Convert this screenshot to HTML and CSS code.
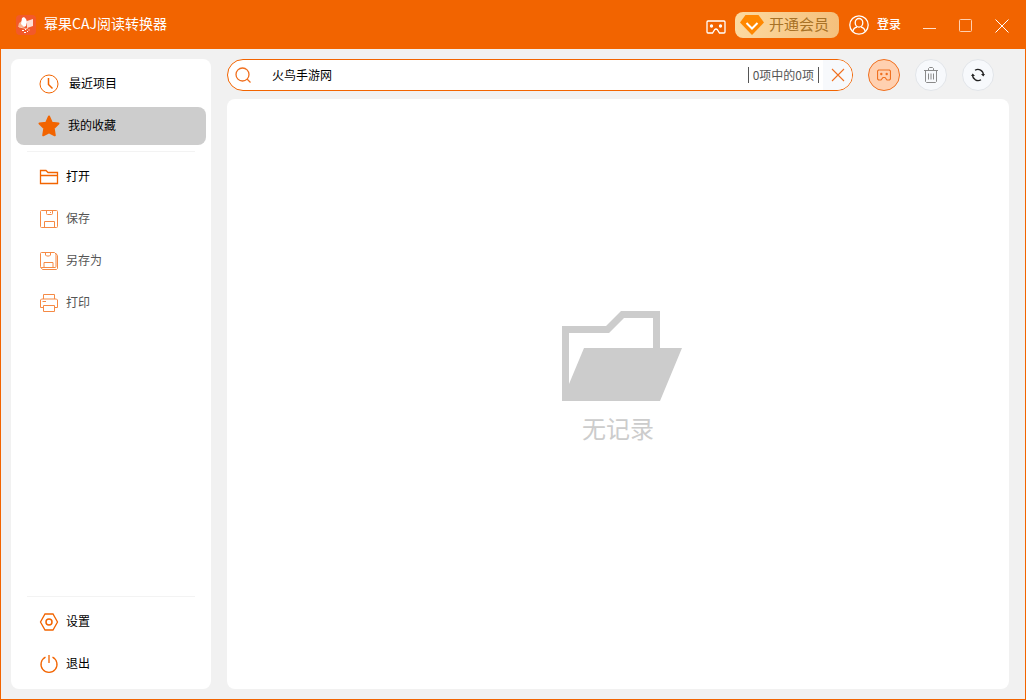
FILE: index.html
```html
<!DOCTYPE html>
<html lang="zh-CN">
<head>
<meta charset="utf-8">
<title>幂果CAJ阅读转换器</title>
<link rel="stylesheet" href="styles.css">
</head>
<body>
<div class="window">
  <header class="titlebar">
    <svg class="logo" viewBox="0 0 20 20" aria-hidden="true">
      <rect width="20" height="20" rx="4" fill="#f2592a"/>
      <path d="M2 12 3 8 6 6 8 12Z" fill="#f9b48f"/>
      <path d="M6 3 8 2 10 4 11 7 10 11 8 12 5 9Z" fill="#fff"/>
      <path d="M11 6 17 4 17 11 11 13Z" fill="#fde0d6"/>
      <path d="M3 12 8 13 10 14 12 13" stroke="#fbc6ac" fill="none"/>
      <path d="M6 15.500h2M9 14.500h1M11 16.500h1M12.500 15h1M8 17.500h2" stroke="#fff" fill="none"/>
    </svg>
    <h1 class="app-name">幂果CAJ阅读转换器</h1>
    <button class="icon-button vr-button" aria-label="护眼模式">
      <svg width="20" height="14" viewBox="0 0 20 14" fill="none" stroke="#fff" stroke-width="1.3">
        <path d="M2 1H18Q19 1 19 2V12Q19 13 18 13H13.500L11.500 9.800Q10 8.300 8.500 9.800L6.500 13H2Q1 13 1 12V2Q1 1 2 1Z"/>
        <circle cx="5.500" cy="6" r="1" fill="#fff"/><circle cx="14.500" cy="6" r="1" fill="#fff"/>
      </svg>
    </button>
    <button class="vip">
      <svg width="24" height="20" viewBox="0 0 24 20" aria-hidden="true">
        <path d="M5.500 0H18.500L24 7.500 12 20 0 7.500Z" fill="#ff8800"/>
        <path d="M6.500 8 12 13.500 17.500 8" fill="none" stroke="#fff" stroke-width="2"/>
      </svg>
      <span>开通会员</span>
    </button>
    <button class="login">
      <svg width="20" height="20" viewBox="0 0 20 20" fill="none" stroke="#fff" stroke-width="1.3" aria-hidden="true">
        <circle cx="10" cy="10" r="9.200"/>
        <ellipse cx="10" cy="7.800" rx="3.800" ry="4.300"/>
        <path d="M3.800 16.500Q4.500 12.800 8 12M16.200 16.500Q15.500 12.800 12 12"/>
      </svg>
      <span>登录</span>
    </button>
    <div class="window-controls">
      <button class="icon-button" aria-label="最小化"><svg width="14" height="14" viewBox="0 0 14 14"><path d="M0 9.500H13" stroke="#ffe0cc"/></svg></button>
      <button class="icon-button" aria-label="最大化"><svg width="14" height="14" viewBox="0 0 14 14"><rect x=".5" y=".5" width="12" height="12" rx="1" fill="none" stroke="#ffd0b0"/></svg></button>
      <button class="icon-button" aria-label="关闭"><svg width="14" height="14" viewBox="0 0 14 14"><path d="M.5 .5 13.500 13.500M13.500 .5 .5 13.500" stroke="#fff"/></svg></button>
    </div>
  </header>

  <div class="workspace">
    <nav class="sidebar">
      <button class="item item-wide">
        <svg class="item-icon" viewBox="0 0 20 20"><circle cx="10" cy="10" r="9"/><path d="M9.500 4V10.500L13.500 14.500" stroke-width="1.500"/></svg>
        <span>最近项目</span>
      </button>
      <button class="item item-wide item-active" aria-current="page">
        <svg class="item-icon item-star" viewBox="0 0 22 22"><path d="M11 1.500 13.800 7.700 20.500 8.500 15.700 13.200 16.800 20.300 11 17.300 5.200 20.300 6.300 13.200 1.500 8.500 8.200 7.700Z" fill="#f26400" stroke-width="2" stroke-linejoin="round"/></svg>
        <span>我的收藏</span>
      </button>
      <hr class="divider">
      <button class="item">
        <svg class="item-icon" viewBox="0 0 20 20"><path d="M1.500 16.500V3.500H7L9 5.500H18.500V16.500ZM1.500 8.500H18.500" stroke-width="1.300"/></svg>
        <span>打开</span>
      </button>
      <button class="item item-disabled" disabled>
        <svg class="item-icon" viewBox="0 0 20 20"><path d="M2.500 1.500H17.500Q18.500 1.500 18.500 2.500V17.500Q18.500 18.500 17.500 18.500H2.500Q1.500 18.500 1.500 17.500V2.500Q1.500 1.500 2.500 1.500ZM5.500 18.500V12.500H15.500V18.500M7.500 1.500V4.500Q7.500 5.500 8.500 5.500H12.500Q13.500 5.500 13.500 4.500V1.500M11.500 3V4"/></svg>
        <span>保存</span>
      </button>
      <button class="item item-disabled" disabled>
        <svg class="item-icon" viewBox="0 0 20 20"><path d="M2.500 1.500H15.500L17 3V15.500Q17 16.500 16 16.500H2.500Q1.500 16.500 1.500 15.500V2.500Q1.500 1.500 2.500 1.500ZM5 16.500V11.500H14V16.500M6.500 1.500V4L7.500 5H10.500L11.500 4V1.500M1.500 16 3.500 18.500H17.500L18.500 17.500V4.500L16.500 2"/></svg>
        <span>另存为</span>
      </button>
      <button class="item item-disabled" disabled>
        <svg class="item-icon" viewBox="0 0 20 20"><path d="M4.500 6V1.500H15.500V6M4.500 14.500H1.500V7L2.500 6H17.500L18.500 7V14.500H15.500M4.500 12.500H15.500V18.500H4.500ZM3.500 8.500H7"/></svg>
        <span>打印</span>
      </button>
      <div class="spacer"></div>
      <hr class="divider">
      <button class="item">
        <svg class="item-icon" viewBox="0 0 20 20"><path d="M6 2H14L18.500 10 14 18H6L1.500 10Z" stroke-width="1.300"/><circle cx="10" cy="10" r="3" stroke-width="1.500"/></svg>
        <span>设置</span>
      </button>
      <button class="item">
        <svg class="item-icon" viewBox="0 0 20 20"><path d="M6.500 3.200A8 8 0 1 0 13.500 3.200M10 1V9" stroke-width="1.300"/></svg>
        <span>退出</span>
      </button>
    </nav>

    <main class="main">
      <div class="toolbar">
        <form class="search">
          <svg class="search-icon" viewBox="0 0 16 16" aria-hidden="true"><circle cx="7.500" cy="7.500" r="6.500"/><path d="M12 12 15.500 15.500"/></svg>
          <input class="search-input" type="text" aria-label="搜索" value="火鸟手游网">
          <span class="count">0项中的0项</span>
          <button class="clear" type="button" aria-label="清除">
            <svg width="14" height="14" viewBox="0 0 14 14"><path d="M1 1 13 13M13 1 1 13" stroke="#f07020" stroke-width="1.100"/></svg>
          </button>
        </form>
        <button class="round round-active" aria-label="预览">
          <svg width="14" height="12" viewBox="0 0 14 12" fill="none" stroke="#f07020" stroke-width="1.200"><path d="M1.500 1H12.500L13.500 2V10L12.500 11H10L8 8.500H6L4 11H1.500L.5 10V2Z"/><circle cx="4.300" cy="5" r=".6"/><circle cx="9.700" cy="5" r=".6"/></svg>
        </button>
        <button class="round" aria-label="删除">
          <svg width="14" height="16" viewBox="0 0 14 16" fill="none" stroke="#8a8a8a"><path d="M0 3.500H14M4.500 3V1.500L5.500 .5H8.500L9.500 1.500V3M1.500 3.500V14.500L2.500 15.500H11.500L12.500 14.500V3.500M4.500 6.500V12.500M7 6.500V12.500M9.500 6.500V12.500"/></svg>
        </button>
        <button class="round" aria-label="刷新">
          <svg width="14" height="14" viewBox="0 0 14 14" fill="none" stroke="#222" stroke-width="1.300"><path d="M4 2.300A5.500 5.500 0 0 1 12.400 7M10 11.700A5.500 5.500 0 0 1 1.600 7"/><path d="M10 6H14L12.300 8.500ZM0 8H4L1.700 5.500Z" fill="#222" stroke="none"/></svg>
        </button>
      </div>
      <section class="panel">
        <svg class="empty-folder" width="120" height="91" viewBox="0 0 120 91" aria-hidden="true">
          <path d="M0 90V15H44L59 0H98V37H120L98 90ZM7 73 22 37H91V7H62L47 22H7Z" fill="#ccc" fill-rule="evenodd"/>
        </svg>
        <p class="empty-text">无记录</p>
      </section>
    </main>
  </div>
</div>
</body>
</html>
```
FILE: styles.css
```css
* {
  box-sizing: border-box;
}

body {
  margin: 0;
  font: 12px/18px "Noto Sans CJK SC", sans-serif;
  color: #000;
}

button,
input {
  margin: 0;
  padding: 0;
  border: 0;
  background: none;
  font: inherit;
  color: inherit;
}

svg {
  display: block;
  flex: none;
}

.window {
  display: flex;
  flex-direction: column;
  min-height: 100vh;
  border: 1px solid #f26400;
  border-top: 0;
  background: #f1f1f1;
}

.titlebar {
  display: flex;
  align-items: center;
  height: 49px;
  padding: 0 16px 0 15px;
  background: #f26400;
  color: #fff;
}

.logo {
  width: 20px;
  height: 20px;
}

.app-name {
  flex: 1;
  margin: 0 0 0 8px;
  padding-bottom: 4px;
  font-size: 14px;
  font-weight: 400;
  line-height: 20px;
}

.vr-button {
  margin: 4px 9px 0 0;
}

.vip {
  display: flex;
  align-items: center;
  gap: 5px;
  height: 26px;
  padding: 0 10px 0 5px;
  border-radius: 8px;
  background: linear-gradient(90deg, #fcdaa0, #f5c07c);
  color: #a87226;
  font-size: 15px;
}

.vip span {
  padding-bottom: 2px;
}

.login {
  display: flex;
  align-items: center;
  gap: 8px;
  margin-left: 10px;
  font-weight: 500;
}

.login span {
  padding-bottom: 2px;
}

.window-controls {
  display: flex;
  gap: 22px;
  margin: 2px 0 0 22px;
}

.workspace {
  display: flex;
  flex: 1;
  gap: 16px;
  padding: 10px 16px 10px 10px;
}

.sidebar {
  display: flex;
  flex: none;
  flex-direction: column;
  gap: 4px;
  width: 200px;
  padding: 6px 5px;
  border-radius: 8px;
  background: #fff;
}

.item {
  display: flex;
  align-items: center;
  gap: 7px;
  height: 38px;
  padding-left: 23px;
  border-radius: 8px;
}

.item span {
  padding-bottom: 2px;
}

.item-wide {
  gap: 10px;
}

.item-active {
  gap: 8px;
  padding-left: 22px;
  background: #cdcdcd;
}

.item-disabled {
  color: #555;
}

.item-icon {
  width: 20px;
  height: 20px;
  fill: none;
  stroke: #f26400;
}

.item-star {
  width: 22px;
  height: 22px;
}

.item-disabled .item-icon {
  stroke: #f58a45;
}

.divider {
  width: 168px;
  height: 1px;
  margin: 2px auto 2px 11px;
  border: 0;
  background: #f3f3f3;
}

.spacer {
  flex: 1;
}

.main {
  display: flex;
  flex: 1;
  flex-direction: column;
  gap: 8px;
  min-width: 0;
}

.toolbar {
  display: flex;
  gap: 15px;
  padding-right: 15px;
}

.search {
  display: flex;
  flex: 1;
  align-items: center;
  height: 32px;
  padding-left: 7px;
  border: 1px solid #f26400;
  border-radius: 16px;
  background: #fff;
  overflow: hidden;
}

.search-icon {
  width: 16px;
  height: 16px;
  fill: none;
  stroke: #f07020;
  stroke-width: 1.3;
}

.search-input {
  flex: 1;
  min-width: 0;
  margin-left: 21px;
  outline: 0;
}

.count {
  padding: 0 4px;
  border: solid #555;
  border-width: 0 1px;
  color: #555;
  line-height: 16px;
}

.clear {
  display: grid;
  place-items: center;
  width: 29px;
  height: 30px;
  margin-left: 4px;
  background: #f7f9fc;
}

.round {
  display: grid;
  place-items: center;
  width: 32px;
  height: 32px;
  border: 1px solid #e2e5e9;
  border-radius: 50%;
  background: #f7f9fc;
}

.round-active {
  border-color: #f07020;
  background: #ffd0b0;
}

.panel {
  display: flex;
  flex: 1;
  flex-direction: column;
  align-items: center;
  justify-content: center;
  padding-bottom: 32px;
  border-radius: 8px;
  background: #fff;
}

.empty-folder {
  margin-left: 8px;
}

.empty-text {
  margin: 8px 0 0;
  color: #ccc;
  font-size: 24px;
  line-height: 36px;
}
```
